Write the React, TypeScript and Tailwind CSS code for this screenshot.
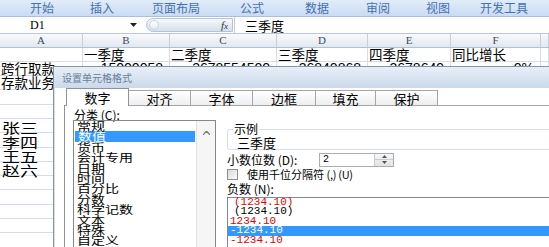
const ribbonTabs = [
  { t: '开始', cls: '' },
  { t: '插入', cls: 'ml-[36px]' },
  { t: '页面布局', cls: 'ml-[38px]' },
  { t: '公式', cls: 'ml-[40px]' },
  { t: '数据', cls: 'ml-[41px]' },
  { t: '审阅', cls: 'ml-[37px]' },
  { t: '视图', cls: 'ml-[36px]' },
  { t: '开发工具', cls: 'ml-[30px]' },
];

const columns = [
  { label: 'A', w: 'w-[83px]' },
  { label: 'B', w: 'w-[87px]' },
  { label: 'C', w: 'w-[107px]' },
  { label: 'D', w: 'w-[91px]' },
  { label: 'E', w: 'w-[83px]' },
  { label: 'F', w: 'w-[90px]' },
  { label: '', w: 'flex-1' },
];

type Row = { cells: string[]; kind?: 'num' | 'name' };

const rows: Row[] = [
  { cells: ['', '一季度', '二季度', '三季度', '四季度', '同比增长'] },
  { cells: ['跨行取款', '15000058', '3678554500', '36840868', '3678649', '0%'], kind: 'num' },
  { cells: ['存款业务'] },
  { cells: [] },
  { cells: [] },
  { cells: ['张三'], kind: 'name' },
  { cells: ['李四'], kind: 'name' },
  { cells: ['王五'], kind: 'name' },
  { cells: ['赵六'], kind: 'name' },
  { cells: [] },
  { cells: [] },
  { cells: [] },
  { cells: [] },
  { cells: [] },
];

const dialogTabs = [
  { t: '数字', w: 'w-[63px]' },
  { t: '对齐', w: 'w-[62px]' },
  { t: '字体', w: 'w-[62px]' },
  { t: '边框', w: 'w-[63px]' },
  { t: '填充', w: 'w-[60px]' },
  { t: '保护', w: 'w-[62px]' },
];

const categories = ['常规', '数值', '货币', '会计专用', '日期', '时间', '百分比', '分数', '科学记数', '文本', '特殊', '自定义'];

const negatives = [
  { t: '(1234.10)', cls: 'pl-[6px] text-[#e60000]' },
  { t: '(1234.10)', cls: 'pl-[6px] text-black' },
  { t: '1234.10', cls: 'pl-[2px] text-[#e60000]' },
  { t: '-1234.10', cls: 'pl-[2px] bg-[#3399ff] text-white' },
  { t: '-1234.10', cls: 'pl-[2px] text-[#e60000]' },
];

function SheetCell({ text, col, row, idx }: { text: string; col: string; row: Row; idx: number }) {
  const isNum = row.kind === 'num' && idx > 0;
  const isName = row.kind === 'name';
  return (
    <div
      className={`${col} shrink-0 h-full border-r border-[#d6dde8] flex items-end whitespace-nowrap ${
        isNum ? 'justify-end pr-[6px] overflow-hidden' : 'pl-[1px]'
      }`}
    >
      {isNum ? (
        <span className="font-['Liberation_Sans',sans-serif] text-[14px] leading-[14px]">{text}</span>
      ) : isName ? (
        <span className="inline-block pl-[1px] text-[18px] leading-[14px] scale-y-[0.75] origin-bottom">{text}</span>
      ) : (
        <span className="text-[13.5px] leading-[13px]">{text}</span>
      )}
    </div>
  );
}

export default function App() {
  return (
    <div className="relative w-[549px] h-[247px] overflow-hidden bg-white text-black font-['Noto_Sans_CJK_SC',sans-serif]">
      {/* ribbon tabs */}
      <div className="h-[17px] flex items-center pl-[30px] bg-linear-to-b from-[#e2ecf9] to-[#cadcf2] border-b border-[#a9c0dd] text-[12px] leading-none text-[#4371b2]">
        {ribbonTabs.map((tab) => (
          <span key={tab.t} className={tab.cls}>
            {tab.t}
          </span>
        ))}
      </div>

      {/* formula bar */}
      <div className="h-[17px] flex items-center border-b border-[#b9c7d8] bg-white">
        <div className="w-[140px] h-full flex items-center">
          <span className="pl-[30px] font-['Liberation_Serif',serif] text-[12px] leading-none">D1</span>
          <svg className="ml-auto mr-[3px]" width="7" height="4" viewBox="0 0 7 4">
            <path d="M0 0h7L3.5 4z" fill="#222" />
          </svg>
        </div>
        <div className="ml-[6px] w-[87px] h-[14px] flex items-center rounded-l-full border border-[#b4c3d5] bg-linear-to-b from-[#f6f8fb] to-[#d6e0ec]">
          <span className="ml-[2px] w-[10px] h-[10px] rounded-full bg-linear-to-b from-white to-[#e4eaf1] border border-[#c9d4e1]" />
          <span className="ml-auto mr-[4px] font-['Liberation_Serif',serif] italic text-[11px] leading-none text-[#333]">
            f<span className="text-[9px]">x</span>
          </span>
        </div>
        <div className="h-full border-l border-[#c3cedb] ml-[1px] pl-[10px] flex items-center text-[13px] leading-none">三季度</div>
      </div>

      {/* column headers */}
      <div className="h-[13.5px] flex bg-linear-to-b from-[#f8fafd] to-[#e2e8f0] border-b border-[#b3c0d0]">
        {columns.map((c, i) => (
          <div
            key={i}
            className={`${c.w} shrink-0 h-full border-r border-[#c5cfdb] flex items-center justify-center font-['Liberation_Serif',serif] text-[11px] leading-none text-[#3f4b5b]`}
          >
            {c.label}
          </div>
        ))}
      </div>

      {/* rows */}
      {rows.map((row, r) => (
        <div key={r} className="h-[14.3px] flex border-b border-[#d6dde8]">
          {columns.map((c, i) => (
            <SheetCell key={i} text={row.cells[i] ?? ''} col={c.w} row={row} idx={i} />
          ))}
        </div>
      ))}

      {/* format cells dialog */}
      <div className="absolute left-[53px] top-[66px] w-[510px] h-[190px] border border-[#8495ab] bg-white flex flex-col">
        <div className="h-[21px] shrink-0 flex items-center pl-[8px] bg-linear-to-b from-[#e8eff8] to-[#cad9ea] text-[10px] leading-none text-[#6a7f97]">
          设置单元格格式
        </div>
        <div className="flex-1 flex flex-col pl-[9px] border-l border-[#d7dfe8]">
          {/* tabs */}
          <div className="h-[18px] shrink-0 flex items-end">
            <div className="w-[2px] h-full border-b border-[#8f949c]" />
            {dialogTabs.map((tab, i) =>
              i === 0 ? (
                <div
                  key={tab.t}
                  className={`${tab.w} h-[18px] flex items-center justify-center border-x border-t border-[#8f949c] bg-white text-[13px] leading-none`}
                >
                  {tab.t}
                </div>
              ) : (
                <div
                  key={tab.t}
                  className={`${tab.w} h-[16px] flex items-center justify-center border-r border-t border-b border-[#a3a7ad] bg-linear-to-b from-white to-[#eeeeee] text-[13px] leading-none`}
                >
                  {tab.t}
                </div>
              ),
            )}
            <div className="flex-1 h-full border-b border-[#a3a7ad]" />
          </div>

          {/* panel */}
          <div className="flex-1 flex border-l border-[#8f949c] bg-white">
            {/* category */}
            <div className="ml-[8px] w-[143px] flex flex-col">
              <div className="mt-[3px] h-[11px] pl-[1px] text-[12px] leading-[11px]">分类 (C):</div>
              <div className="flex-1 flex border border-[#828790]">
                <div className="flex-1 flex flex-col">
                  {categories.map((c) => (
                    <div
                      key={c}
                      className={`h-[10.4px] pl-[3px] text-[14px] leading-[10.4px] whitespace-nowrap ${
                        c === '数值' ? 'mx-[1px] pl-[2px] bg-[#3399ff] text-white' : ''
                      }`}
                    >
                      <span className="inline-block align-top leading-[10.4px] scale-y-[0.78]">{c}</span>
                    </div>
                  ))}
                </div>
                <div className="w-[19px] bg-[#f6f6f6] border-l border-[#e2e2e2] flex flex-col items-center">
                  <svg className="mt-[10px]" width="7" height="4" viewBox="0 0 7 4">
                    <path d="M0 4L3.5 0L7 4" fill="none" stroke="#7a7a7a" strokeWidth="1.2" />
                  </svg>
                </div>
              </div>
            </div>

            {/* settings */}
            <div className="ml-[11px] flex-1 flex flex-col">
              <div className="relative mt-[23px] h-[21px] border border-[#d5dfe5] rounded-[3px] flex items-end pl-[9px]">
                <span className="absolute -top-[8px] left-[5px] bg-white px-[1px] text-[12px] leading-[13px]">示例</span>
                <span className="text-[13px] leading-[12px]">三季度</span>
              </div>
              <div className="mt-[3px] h-[13px] flex items-center">
                <span className="w-[92px] text-[12px] leading-none whitespace-nowrap">小数位数 (D):</span>
                <div className="w-[75px] h-[14px] flex border border-[#abadb3] bg-white">
                  <span className="pl-[3px] font-['Liberation_Mono',monospace] text-[10px] leading-[12px]">2</span>
                  <div className="ml-auto w-[19px] flex flex-col border-l border-[#c9ccd1] bg-linear-to-b from-[#f7f7f7] to-[#e3e3e3]">
                    <div className="flex-1 flex items-center justify-center border-b border-[#c9ccd1]">
                      <svg width="5" height="3" viewBox="0 0 5 3">
                        <path d="M0 3L2.5 0L5 3z" fill="#555" />
                      </svg>
                    </div>
                    <div className="flex-1 flex items-center justify-center">
                      <svg width="5" height="3" viewBox="0 0 5 3">
                        <path d="M0 0h5L2.5 3z" fill="#555" />
                      </svg>
                    </div>
                  </div>
                </div>
              </div>
              <div className="mt-[3px] h-[11px] flex items-center">
                <span className="w-[11px] h-[11px] border border-[#8f8f8f] bg-linear-to-br from-[#d9d9d9] to-[#fbfbfb]" />
                <span className="ml-[9px] text-[11px] leading-none whitespace-nowrap">
                  使用千位分隔符 <span className="tracking-[-0.3px]">(,) (U)</span>
                </span>
              </div>
              <div className="mt-[4px] h-[10px] text-[12px] leading-[10px]">负数 (N):</div>
              <div className="mt-[2.5px] flex-1 flex flex-col border-t border-l border-[#828790]">
                {negatives.map((n, i) => (
                  <div
                    key={i}
                    className={`h-[9.5px] font-['Liberation_Mono',monospace] text-[11px] leading-[9.5px] whitespace-nowrap ${n.cls}`}
                  >
                    {n.t}
                  </div>
                ))}
              </div>
            </div>
          </div>
        </div>
      </div>
    </div>
  );
}
